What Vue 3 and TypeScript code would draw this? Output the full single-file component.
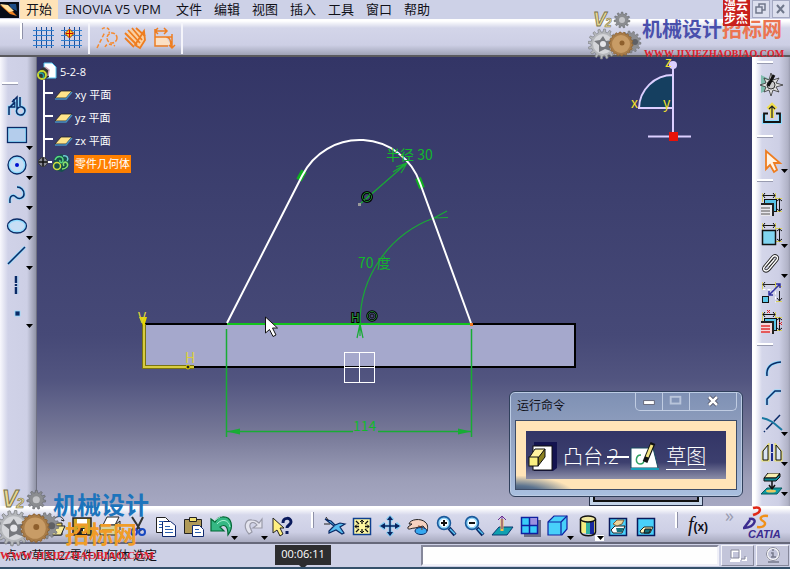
<script setup lang="ts">
import { ref } from 'vue'

interface Tool {
  label: string
  art: string
  wide?: boolean
}

const navy = '#0a2a66'
const sky = '#8fdcff'

/** Small triangle that marks a tool with a fly-out menu. */
const drop = (x: number, y: number): string =>
  `<path d="M${x - 3} ${y - 2}h7l-3.500 4z" fill="#000"/>`

/** Line drawn twice: a pale halo under a thin dark stroke. */
const halo = (d: string): string =>
  `<path d="${d}" fill="none" stroke="${sky}" stroke-width="3"/><path d="${d}" fill="none" stroke="${navy}" stroke-width="1.500"/>`

/** Outline of a gear wheel with square teeth. */
function gear(cx: number, cy: number, outer: number, inner: number, teeth: number): string {
  const points: string[] = []
  const step = (Math.PI * 2) / teeth
  for (let i = 0; i < teeth; i++) {
    const a = i * step
    const corners: [number, number][] = [
      [inner, a],
      [outer, a + step * 0.12],
      [outer, a + step * 0.45],
      [inner, a + step * 0.57]
    ]
    for (const [r, t] of corners) {
      points.push(`${(cx + r * Math.cos(t)).toFixed(1)} ${(cy + r * Math.sin(t)).toFixed(1)}`)
    }
  }
  return `M${points.join('L')}Z`
}

const menus: string[] = ['开始', 'ENOVIA V5 VPM', '文件', '编辑', '视图', '插入', '工具', '窗口', '帮助']

const gridLines =
  '<path d="M7.500 2v21M12.500 2v21M17.500 2v21M22.500 2v21" stroke="#1c4f9c"/><path d="M4 5.500h21M4 10.500h21M4 15.500h21M4 20.500h21" stroke="#2f7fd0"/>'

const gridTools: Tool[] = [
  { label: '网格', art: gridLines },
  {
    label: '点对齐',
    art: gridLines + '<path d="M12.500 4l4.500 4.500-4.500 4.500-4.500-4.500z" fill="#ffd020" stroke="#a03000"/><path d="M12.500 5v7M9 8.500h7" stroke="#c00"/>'
  }
]

const modeTools: Tool[] = [
  {
    label: '构造/标准元素',
    art: '<g fill="none" stroke="#f58a30" stroke-width="1.500"><path d="M3 23l8-16" stroke-dasharray="4 2"/><path d="M8 4c4-3 9 0 7 4" stroke-dasharray="3 2"/><circle cx="18" cy="13" r="5" stroke-dasharray="4 1.500"/><path d="M11 22c2-4 6-3 10-1" stroke-dasharray="3 2"/></g>'
  },
  {
    label: '几何约束',
    art: '<path d="M4 10l5-6 3 3 3-3 3 4 5-2v11l-5 5-6-2z" fill="#fbd0a0"/><g fill="none" stroke="#ee7d20" stroke-width="1.800"><path d="M3 8l12 12M6 5l12 13M10 3l10 12M3 13l9 9M14 3l9 8"/><path d="M22 6l-9 14 5 3 5-8z"/></g>'
  },
  {
    label: '尺寸约束',
    art: '<path d="M5 12h11l5 8H5z" fill="#fbe0c4"/><g fill="none" stroke="#ee7d20" stroke-width="1.500"><path d="M5 4v17h13M5 6h12M8 3L5 6l3 3M14 3l3 3-3 3M16 12c4 0 5 4 5 9M5 12h17M22 9v14M19 20l3 3 3-3" /></g>'
  }
]

const sketchTools: Tool[] = [
  {
    label: '轮廓',
    art: halo('M9 23v-8h6v-4l-4 3M9 23v-7l5-5 0-4') +
      `<path d="M12 10l5-5v5" fill="none" stroke="${navy}" stroke-width="1.500"/>` +
      halo('M20 5v9M17 8v9c-3 6 7 9 8 2 0-4-5-6-8-2')
  },
  {
    label: '矩形',
    art: `<rect x="8" y="6" width="18" height="14" fill="#b4cdec" stroke="${sky}" stroke-width="2"/><rect x="7.500" y="5.500" width="19" height="15" fill="none" stroke="${navy}" stroke-width="1.300"/>` + drop(29, 26)
  },
  {
    label: '圆',
    art: `<circle cx="17" cy="13" r="8" fill="#c7def5" stroke="${sky}" stroke-width="2"/><circle cx="17" cy="13" r="9" fill="none" stroke="${navy}" stroke-width="1.300"/><circle cx="17" cy="13" r="2" fill="#0010d0"/>` + drop(29, 26)
  },
  { label: '样条线', art: halo('M10 21c-1-9 4-8 6-6 3 3 8 1 8-3 0-4-3-7-7-7') + drop(29, 26) },
  {
    label: '椭圆',
    art: `<ellipse cx="17" cy="14" rx="8.500" ry="6" fill="#c7def5" stroke="${sky}" stroke-width="2"/><ellipse cx="17" cy="14" rx="9.500" ry="7" fill="none" stroke="${navy}" stroke-width="1.300"/>` + drop(29, 26)
  },
  { label: '直线', art: halo('M8 22L25 5') + drop(29, 26) },
  { label: '轴', art: `<path d="M16 4v7M16 12v2M16 15v7" stroke="${navy}" stroke-width="2.500"/><path d="M18 4v18" stroke="#9fcdf0"/>` },
  { label: '点', art: `<rect x="15" y="9" width="5" height="5" fill="${navy}" stroke="${sky}" stroke-width=".800"/>` + drop(29, 24) }
]

const dims =
  '<path d="M10.500 4v9M23.500 4v9M24 9.500h6M24 22.500h6" stroke="#d8cf5a" fill="none"/><path d="M11 6.500h12M13 4l-2 2.500 2 2.500M21 4l2 2.500-2 2.500M27.500 10v12M25 12l2.500-2 2.500 2M25 20l2.500 2 2.500-2" stroke="#111" fill="none"/>'

const rightGroups: Tool[][] = [
  [
    {
      label: '草图设置',
      art: '<path d="M9 4l18 9-18 9z" fill="#7fbcae"/><path d="M19 2l2 7 6-2-3 5 7 2-7 2 3 5-6-2-2 6-2-6-5 2 2-5-6-2 6-2-2-5 5 2z" fill="#ddd" stroke="#333" stroke-width=".800"/><circle cx="19" cy="14" r="4" fill="#ccc" stroke="#333"/><path d="M22 4l-6 11" stroke="#111" stroke-width="3"/>'
    },
    {
      label: '退出工作台',
      art: `<path d="M12 13v8h16v-8" fill="#cfd2e8" stroke="${sky}" stroke-width="4"/><path d="M16 12.500h-4v8.500h16v-8.500h-4" fill="none" stroke="#111" stroke-width="1.800"/><path d="M20 17V5M16 8l4-4 4 4" fill="none" stroke="#f0de50" stroke-width="4"/><path d="M20 17V5M17 8l3-3 3 3" fill="none" stroke="#222" stroke-width="1.200"/>`
    }
  ],
  [
    {
      label: '选择',
      art: '<path d="M14 6v18l4-4 4 7 3-2-3-7h6z" fill="#fff3e4" stroke="#ee7d20" stroke-width="1.800"/>' + drop(32, 26)
    }
  ],
  [
    {
      label: '对话框中定义的约束',
      art: dims + '<rect x="12.500" y="10.500" width="12" height="12" fill="#58c4e8" stroke="#111"/><rect x="9" y="15" width="12" height="12" fill="#e8e8ee"/><path d="M9 15h12v12" fill="none" stroke="#222" stroke-width="2"/><path d="M9 19h9M9 22h9M9 25h9" stroke="#555"/>'
    },
    {
      label: '约束',
      art: dims + '<rect x="10.500" y="11.500" width="13" height="14" fill="#80d4f0" stroke="#111" stroke-width="1.500"/>' + drop(32, 27)
    },
    {
      label: '固联',
      art: '<g transform="translate(4 3) scale(.8)"><path d="M11 18L21 6c3-3 8 0 5 4L16 22c-4 4-9 0-5-4M15 18l8-9" fill="none" stroke="#222" stroke-width="4"/><path d="M11 18L21 6c3-3 8 0 5 4L16 22c-4 4-9 0-5-4M15 18l8-9" fill="none" stroke="#fff" stroke-width="1.800"/></g>' + drop(32, 27)
    },
    {
      label: '制作动画约束',
      art: '<path d="M10.500 3v8M23.500 3v8M24 7.500h6M24 22.500h6" stroke="#d8cf5a"/><path d="M11 5.500h12M13 3l-2 2.500 2 2.500M27.500 12v10M25 19l2.500 3 2.500-3" fill="none" stroke="#222"/><path d="M10.500 10.500h13v13" fill="none" stroke="#fff" stroke-dasharray="3 2"/><rect x="10.500" y="17.500" width="6" height="6" fill="#5cc8e8" stroke="#111"/><path d="M17 16l11-11M24 5h4v4M17 12v4h4" fill="none" stroke="#3030a0" stroke-width="1.500"/>'
    },
    {
      label: '编辑多重约束',
      art: '<g transform="translate(0 -1)">' + dims + '</g><rect x="12.500" y="9.500" width="12" height="12" fill="#58c4e8" stroke="#111"/><rect x="9" y="14" width="12" height="10" fill="#f4d8dc"/><path d="M9 13h12v12" fill="none" stroke="#222" stroke-width="2"/><path d="M9 17h9M9 20h9M9 23h9" stroke="#e03030" stroke-width="1.500"/><path d="M15 1l3 3M18 1l-3 3M27 13l3 3M30 13l-3 3" stroke="#e02020"/>'
    }
  ],
  [
    { label: '圆角', art: halo('M15 23c-1-8 3-13 14-14') },
    { label: '倒角', art: halo('M15 22v-6l8-8h6') },
    {
      label: '修剪',
      art: '<path d="M10 5c8 1 13 6 20 12" fill="none" stroke="#1878a0" stroke-width="2"/><path d="M28 2L12 19" stroke="#0a2a66" stroke-width="1.500" stroke-dasharray="9 2"/>' + drop(32, 21)
    },
    {
      label: '镜像',
      art: '<path d="M16 3v14h-5V9zM24 3v14h5V9z" fill="#d5ecf0" stroke="#e6de70" stroke-width="3"/><path d="M16 2v15h-5V8zM24 2v15h5V8z" fill="#d9e4f4" stroke="#111"/><path d="M20 1v18" stroke="#1a2a90" stroke-width="2" stroke-dasharray="8 1"/>' + drop(32, 21)
    },
    {
      label: '投影3D元素',
      art: '<path d="M16 0h12l-4 5H12z" fill="#f8efb0" stroke="#111"/><path d="M12 5h12l4-4v3l-4 4H12z" fill="#0c8a96" stroke="#111"/><path d="M15 15h15l-5 6H9z" fill="#0c9aa0" stroke="#0a5a60"/><path d="M20 8v7M17 12l3 4 3-4" fill="none" stroke="#111" stroke-width="1.500"/><ellipse cx="19" cy="18" rx="5" ry="1.500" fill="#e8c860"/>' + drop(32, 21)
    }
  ]
]

const magnifier =
  `<path d="M17 22l6 7" stroke="${navy}" stroke-width="4"/><path d="M18 23l5 5" stroke="#58c4f4" stroke-width="1.500"/><circle cx="12" cy="17" r="6" fill="#f4fbff" stroke="#1b5a9c" stroke-width="2.500"/><circle cx="12" cy="17" r="5" fill="none" stroke="${sky}" stroke-width="1.200"/>`

const fileTools: Tool[] = [
  { label: '新建', art: '<path d="M7 11h10l5 5v14H7z" fill="#fff" stroke="#222"/>' },
  { label: '打开', art: '<path d="M4 15h7l2 2h9v12H4z" fill="#e8d060" stroke="#222"/><path d="M4 29l4-9h17l-4 9z" fill="#f8ec9c" stroke="#222"/><path d="M15 12c4-3 8-1 9 3l-3-1" fill="none" stroke="#222"/>' },
  { label: '保存', art: '<path d="M5 12h18v17H5z" fill="#c9a628" stroke="#222" stroke-width="1.500"/><rect x="9" y="13" width="10" height="7" fill="#fff"/><rect x="9" y="22" width="10" height="7" fill="#222"/><rect x="15" y="23" width="3" height="5" fill="#fff"/>' },
  { label: '打印', art: '<path d="M11 11h12l-4 8H7z" fill="#fff" stroke="#222"/><path d="M4 19h15l5-4v9l-5 5H4z" fill="#d8d2a0" stroke="#222"/><path d="M6 24h12" stroke="#c9a628" stroke-width="2"/>' },
  { label: '剪切', art: '<path d="M8 11l9 14M19 11l-7 14" stroke="#333" stroke-width="2"/><circle cx="10" cy="26" r="3" fill="none" stroke="#1848c0" stroke-width="2"/><circle cx="18" cy="26" r="3" fill="none" stroke="#1848c0" stroke-width="2"/>' },
  { label: '复制', art: '<path d="M4.500 11.500h9l4 4v11h-13z" fill="#fff" stroke="#222"/><path d="M10.500 15.500h8l5 4v11h-13z" fill="#fff" stroke="#102a70"/><path d="M7 15.500h5M7 18.500h3M7 21.500h3M13 20.500h5M13 23.500h8M13 26.500h8" stroke="#2a60b0"/>' },
  { label: '粘贴', art: '<path d="M4.500 13.500h17v14h-17z" fill="#b09a58" stroke="#222"/><path d="M9.500 11.500h7v4h-7z" fill="#f0e070" stroke="#222"/><path d="M12.500 19.500h7l4 4v7h-11z" fill="#fff" stroke="#102a70"/><path d="M15 23.500h4M15 26.500h6" stroke="#2a60b0"/>' },
  { label: '撤消', wide: true, art: '<path d="M3 13v12h13l-4-4c4-3 8-2 8 8 6-8 4-19-6-18-4 0-6 3-7 5z" fill="#35b884" stroke="#063" stroke-width="1.200"/><path d="M9 18c5-6 12-4 13 3M6 15l6-4" fill="none" stroke="#a8f0d0"/>' + drop(26, 32) },
  { label: '重做', wide: true, art: '<path d="M24 13v9h-9l4-3c-3-4-8-3-7 2l2 5-3 2c-7-8-3-15 3-14 3 0 5 1 7 3z" fill="#e4e4ee" stroke="#999aa8" stroke-width="1.200"/>' + drop(26, 32) },
  { label: '这是什么？', art: '<path d="M5 12v15l4-3 3 6 3-2-3-6h4z" fill="#fff080" stroke="#222"/><path d="M15 17c0-6 8-6 8-1 0 3-4 3-4 6M19 25v3" fill="none" stroke="#0a1a5c" stroke-width="3"/>' }
]

const viewTools: Tool[] = [
  { label: '飞行模式', art: '<path d="M5 13l6 2 4 4 5-2 5 1-5 3 4 6-2 1-6-4-7 3v-2l5-5-4-3z" fill="#58bdf0" stroke="#0a2a66" stroke-width="1.200"/><path d="M4 18h6M8 14l-2-3" stroke="#222"/>' },
  { label: '全部适应', art: '<rect x="5.500" y="12.500" width="17" height="16" fill="#fdf6a0" stroke="#104090" stroke-width="1.500"/><path d="M14 14v4M14 23v4M7 20.500h4M17 20.500h4M8 15l3 3M20 15l-3 3M8 26l3-3M20 26l-3-3" stroke="#111" stroke-width="1.300"/><path d="M12 16l2-2 2 2M12 25l2 2 2-2M9 18.500l-2 2 2 2M19 18.500l2 2-2 2" fill="none" stroke="#111"/>' },
  { label: '平移', art: '<path d="M14 12v17M6 20h17M11 14l3-3 3 3M11 26l3 3 3-3M9 17l-4 3 4 3M20 17l3 3-3 3" fill="none" stroke="#80ccf4" stroke-width="3"/><path d="M14 12v17M6 20h17" stroke="#0a2460" stroke-width="1.500"/><path d="M14 10l3 4h-6zM14 30l3-4h-6zM4 20l5-3v6zM24 20l-5-3v6z" fill="#0a2460"/>' },
  { label: '旋转', art: '<path d="M5 18c1-5 12-6 16-2 3 2 3 6 2 9l-4-5-8 2c-4 0-8 3-7-1l4-3z" fill="#f6d2c0" stroke="#222"/><ellipse cx="17" cy="25" rx="6" ry="3.500" fill="#36a8f0" stroke="#0a2a66"/><path d="M14 20c3 0 4 2 4 4" fill="none" stroke="#7a4020"/>' },
  { label: '放大', art: magnifier + '<path d="M12 14v6M9 17h6" stroke="#111" stroke-width="2"/>' },
  { label: '缩小', art: magnifier + '<path d="M9 17h6" stroke="#111" stroke-width="2"/>' },
  { label: '法线视图', art: '<path d="M11 21h14l-6 8H4z" fill="#10a0b0" stroke="#0a3a70"/><path d="M14 25V13" stroke="#f0c050" stroke-width="3"/><path d="M14 23V11M10 14l4-4 4 4" fill="none" stroke="#6a2a90"/>' },
  { label: '创建多视图', art: '<path d="M8 14h17v17H8z" fill="#6c6e88"/><rect x="5.500" y="11.500" width="16" height="16" fill="#38ccf8" stroke="#1020a0" stroke-width="1.500"/><path d="M14 12h7v7h-7z" fill="#9c90e0"/><path d="M13.500 12v16M6 19.500h16" stroke="#1020a0" stroke-width="1.500"/>' },
  { label: '等轴测视图', wide: true, art: '<path d="M4 16l6-6h13v13l-5 6H4z" fill="#48d0fa" stroke="#1020a0" stroke-width="1.200"/><path d="M4 16h13v13M17 16l6-6" fill="none" stroke="#1020a0" stroke-width="1.200"/>' + drop(26, 32) },
  { label: '带边着色', wide: true, art: '<rect x="7" y="13" width="14" height="14" fill="#f4ee80"/><rect x="12" y="14" width="4" height="14" fill="#30b0a0"/><rect x="16" y="14" width="4" height="14" fill="#1828a0"/><path d="M6.500 13v13c2 5 14 5 15 0V13" fill="none" stroke="#111" stroke-width="1.500"/><ellipse cx="14" cy="13" rx="7.500" ry="3" fill="#f0e8a0" stroke="#111" stroke-width="1.500"/><path d="M21 29h9v6h-9z" fill="#fff"/>' + drop(26, 32) },
  { label: '隐藏/显示', art: '<rect x="5.500" y="12.500" width="17" height="17" fill="#48d0fa" stroke="#0a1a5c" stroke-width="1.500"/><path d="M7 24l4-4h10l-3 7H9z" fill="#fff" stroke="#222"/><path d="M12 22h8l-2 4h-5z" fill="#18707a"/><path d="M9 18l4-4h7l-2 4-5 2z" fill="#ecd49a" stroke="#7a6040"/>' },
  { label: '交换可视空间', art: '<rect x="5.500" y="12.500" width="17" height="17" fill="#48d0fa" stroke="#0a1a5c" stroke-width="1.500"/><path d="M8 25l4-4h9l-3 6H9z" fill="#fff8c0" stroke="#222"/><path d="M13 23h6l-2 4h-5z" fill="#18707a" stroke="#111"/>' }
]

const planes: string[] = ['xy 平面', 'yz 平面', 'zx 平面']
const stamps: string[] = ['top', 'low']
const command = ref('')
</script>

<template>
  <div class="app">
    <nav class="menubar" aria-label="主菜单">
      <svg class="app-mark" viewBox="0 0 20 19" aria-hidden="true">
        <rect y="2" width="19" height="16" fill="#080c18" />
        <path d="M9 4h7l1 7-6-3z" fill="#1c4c88" />
        <path d="M0 5l8 2 9 9-7-2z" fill="#f08020" />
        <path d="M0 4l8 1 6 6-5 1z" fill="#ffe0a0" />
      </svg>
      <button
        v-for="(m, i) in menus"
        :key="m"
        type="button"
        class="menu"
        :class="{ open: i === 0, long: m.length > 2 }"
      >{{ m }}</button>
      <span class="mdi">
        <button type="button" aria-label="还原">
          <svg viewBox="0 0 16 16"><path d="M6 6V3h6v6h-3M3 6h6v6H3z" fill="none" stroke="#70788c" stroke-width="1.500" /></svg>
        </button>
        <button type="button" aria-label="关闭">
          <svg viewBox="0 0 16 16"><path d="M4 4l7 8M11 4l-7 8" stroke="#70788c" stroke-width="2" /></svg>
        </button>
      </span>
    </nav>

    <div class="topbar" role="toolbar" aria-label="草图工具">
      <i class="grip-v"></i>
      <div class="set">
        <button v-for="t in gridTools" :key="t.label" type="button" class="t28" :aria-label="t.label">
          <svg viewBox="0 0 28 26" v-html="t.art"></svg>
        </button>
      </div>
      <div class="set">
        <button v-for="t in modeTools" :key="t.label" type="button" class="t28" :aria-label="t.label">
          <svg viewBox="0 0 28 26" v-html="t.art"></svg>
        </button>
      </div>
    </div>

    <div class="work">
      <div class="side left" role="toolbar" aria-label="轮廓">
        <i class="grip-h"></i>
        <button v-for="t in sketchTools" :key="t.label" type="button" :aria-label="t.label">
          <svg viewBox="0 0 37 30" v-html="t.art"></svg>
        </button>
      </div>

      <main class="view">
        <svg class="scene" viewBox="37 57 715 449" preserveAspectRatio="xMinYMin meet">
          <rect x="144" y="324" width="431" height="43" fill="#a5a8cc" stroke="#000" stroke-width="2" />
          <g fill="none" stroke="#18ac34" stroke-width="1.200">
            <path d="M226.500 329v108M471.500 329v108" stroke-width="1.500" />
            <path d="M227 431.500h126M378 431.500h93" stroke-width="1.500" />
            <path d="M360 324A112 112 0 0 1 434 218L447 211M434 218L448 217.500" />
            <path d="M360 324l-3 14M360 324l3 14M360 320v16" />
            <path d="M360 204L407 163M396 167L407 163L401 173M393 172L407 163" />
          </g>
          <path d="M227 431.500l13-3v6zM471 431.500l-13-3v6z" fill="#18ac34" />
          <path d="M299 180l5-9M418 178l4 10" stroke="#10b020" stroke-width="6" />
          <path d="M227 324h244" stroke="#12c41c" stroke-width="2" />
          <path d="M227 323L302 176A64 64 0 0 1 420 183L471 323" fill="none" stroke="#fff" stroke-width="2" />
          <rect x="470" y="323" width="3" height="3" fill="#f07820" />
          <rect x="358" y="203" width="3" height="3" fill="#9a9a9a" />
          <g fill="none">
            <circle cx="367" cy="197" r="4.500" stroke="#000" stroke-width="3" />
            <circle cx="367" cy="197" r="4.500" stroke="#1a8a2c" />
            <path d="M364 200l6-6" stroke="#1a8a2c" />
            <circle cx="372" cy="316" r="4.500" stroke="#000" stroke-width="2.500" />
            <circle cx="372" cy="316" r="4.500" stroke="#2a9a3c" stroke-width=".800" />
            <circle cx="372" cy="316" r="2" stroke="#111" />
          </g>
          <text x="351" y="322" class="mark-h">H</text>
          <text x="386" y="160" class="dim">半径 30</text>
          <text x="358" y="268" class="dim">70 度</text>
          <text x="353" y="431" class="dim">114</text>

          <path d="M144 324v43h50" fill="none" stroke="#7a7410" stroke-width="4" />
          <path d="M144 320v47h50" fill="none" stroke="#d8cc40" stroke-width="2" />
          <path d="M139 317l5 10 3-10z" fill="#e8d800" />
          <circle cx="188" cy="367" r="2" fill="#222" stroke="#e8d800" />
          <text x="138" y="323" class="axis">V</text>
          <text x="185" y="363" class="axis">H</text>

          <g fill="none" stroke="#fff">
            <rect x="344.500" y="352.500" width="30" height="30" />
            <path d="M359.500 353v30M345 367.500h30" />
          </g>
          <path d="M265.500 317v16l4-3.500 3.500 7 3-1.500-3.500-7h5z" fill="#fff" stroke="#111" />

          <path d="M639 108A34 34 0 0 1 673 75V108Z" fill="#153f60" stroke="#dccfff" stroke-width="2" />
          <path d="M673 65v68M648 136.500h43" stroke="#dccfff" stroke-width="2" />
          <circle cx="673" cy="65" r="4" fill="#dccfff" />
          <rect x="669" y="132" width="9" height="9" fill="#e81208" />
          <text x="665" y="67" class="compass">z</text>
          <text x="631" y="108" class="compass">x</text>
          <text x="663" y="108" class="compass">y</text>
        </svg>

        <ul class="tree">
          <li class="root">
            <svg viewBox="0 0 22 20" aria-hidden="true">
              <path d="M7 1h8l4 4v11H7z" fill="#fff" stroke="#58c8f0" />
              <path d="M2 8l5-3 5 3v7l-5 3-5-3z" fill="#333" />
              <path d="M8 5l4 3-1 6" fill="none" stroke="#c8a0b0" stroke-width="1.500" />
              <circle cx="5" cy="13" r="4" fill="none" stroke="#c8d830" stroke-width="2" />
              <path d="M2 12c3-3 6 1 4 4" fill="none" stroke="#20a0a0" stroke-width="1.500" />
            </svg>
            <span>5-2-8</span>
          </li>
          <li v-for="p in planes" :key="p" class="plane">
            <svg viewBox="0 0 30 20" aria-hidden="true">
              <path d="M0 8h9" stroke="#fff" stroke-width="2" />
              <path d="M17 6h11l-6 7H11z" fill="#ffe48a" stroke="#222" stroke-width=".800" />
              <path d="M11 14h11l6-7" fill="none" stroke="#4890c0" stroke-width="1.500" />
            </svg>
            <span>{{ p }}</span>
          </li>
          <li class="body">
            <svg viewBox="0 0 34 20" aria-hidden="true">
              <path d="M5 8h10" stroke="#fff" stroke-width="2" />
              <circle cx="6" cy="8" r="4.500" fill="#888a94" stroke="#333" />
              <path d="M2 8h8M6 4v8" stroke="#111" stroke-width="1.500" />
              <path d="M18 3l6-3 7 2 2 6-2 6-6 4-7-2-2-6z" fill="#16504c" />
              <g fill="none" stroke-width="1.500">
                <circle cx="20" cy="12" r="3.500" stroke="#d0e040" />
                <path d="M18 6c2-5 8-4 8 0s-4 3-3 0" stroke="#58d880" />
                <path d="M25 15c4 0 7-3 5-6-2-2-5 0-3 3" stroke="#88e070" />
                <path d="M26 2c4-1 6 2 4 5" stroke="#70c8d8" />
              </g>
            </svg>
            <span class="picked">零件几何体</span>
          </li>
        </ul>

        <div class="behind"></div>
        <section class="dialog" aria-label="运行命令">
          <header>
            <span class="title">运行命令</span>
            <span class="win">
              <button type="button" aria-label="最小化"><svg viewBox="0 0 27 18"><rect x="8" y="9" width="11" height="4" fill="#fff" stroke="#556" stroke-width=".800" /></svg></button>
              <button type="button" aria-label="最大化"><svg viewBox="0 0 27 18"><rect x="8" y="5" width="10" height="7" fill="none" stroke="#b8c4da" stroke-width="2" /></svg></button>
              <button type="button" class="shut" aria-label="关闭"><svg viewBox="0 0 46 18"><path d="M19 5l8 8M27 5l-8 8" stroke="#445" stroke-width="4" /><path d="M19 5l8 8M27 5l-8 8" stroke="#fff" stroke-width="2.500" /></svg></button>
            </span>
          </header>
          <div class="pane">
            <div class="graph">
              <svg viewBox="0 0 30 30" aria-hidden="true">
                <path d="M7 0h23v26l-4 3H7z" fill="#141450" />
                <rect x="6" y="4" width="19" height="24" fill="#fff" stroke="#111" />
                <path d="M2 16l6-9h10l-6 9z" fill="#fff2a0" stroke="#111" />
                <path d="M11 16l7-9v8l-7 9z" fill="#8a8020" stroke="#111" />
                <rect x="2" y="15" width="9" height="9" fill="#fbf080" stroke="#111" />
              </svg>
              <span class="node">凸台.2</span>
              <i class="link"></i>
              <svg viewBox="0 0 30 30" aria-hidden="true">
                <path d="M1 6h22l5 20H1z" fill="#fff" stroke="#174a60" />
                <path d="M1 27h28" stroke="#18a0b8" stroke-width="2" />
                <path d="M11 13c-6 0-6 9-1 9 3 0 4-2 4-4" fill="none" stroke="#30a060" stroke-width="1.500" />
                <path d="M23 1L15 20" stroke="#111" stroke-width="5" />
                <path d="M22 3l-5 12" stroke="#f4e480" stroke-width="3" />
              </svg>
              <span class="node under">草图</span>
            </div>
          </div>
        </section>
      </main>

      <div class="side right" role="toolbar" aria-label="约束和操作">
        <template v-for="(g, i) in rightGroups" :key="i">
          <i class="grip-h"></i>
          <button v-for="t in g" :key="t.label" type="button" :aria-label="t.label">
            <svg viewBox="0 0 38 30" v-html="t.art"></svg>
          </button>
        </template>
      </div>
    </div>

    <div class="bottombar" role="toolbar" aria-label="标准和视图">
      <button v-for="t in fileTools" :key="t.label" type="button" :class="t.wide ? 't30' : 't28'" :aria-label="t.label">
        <svg :viewBox="t.wide ? '0 0 30 36' : '0 0 28 36'" v-html="t.art"></svg>
      </button>
      <i class="grip-v"></i>
      <button v-for="t in viewTools" :key="t.label" type="button" :class="t.wide ? 't30' : 't28'" :aria-label="t.label">
        <svg :viewBox="t.wide ? '0 0 30 36' : '0 0 28 36'" v-html="t.art"></svg>
      </button>
      <i class="grip-v"></i>
      <button type="button" class="fx" aria-label="公式"><b>f</b>(x)</button>
      <span class="more">»</span>
      <svg class="catia" viewBox="0 0 46 36" aria-label="CATIA">
        <path d="M10 2c8-2 9 3 3 6l-3 1" fill="none" stroke="#e02818" stroke-width="2.500" />
        <path d="M6 13c9-2 7 8-5 9l6-8" fill="none" stroke="#3c2c90" stroke-width="2.500" />
        <path d="M25 10c-8-1-9 3-5 5s2 7-6 6" fill="none" stroke="#f09018" stroke-width="2.500" />
        <text x="5" y="32" class="brand">CATIA</text>
      </svg>
    </div>

    <footer class="status">
      <span class="message">点.6/草图.2/零件几何体 选定</span>
      <span class="clock">00:06:11</span>
      <input v-model="command" type="text" aria-label="命令输入" />
      <button type="button" aria-label="对话框位置"><svg viewBox="0 0 31 19"><path d="M10 5h8v8h-8zM20 14h4v-3M8 15h10" fill="none" stroke="#fff" stroke-width="2" /><path d="M9 4h8v8H9zM19 13h4v-3" fill="none" stroke="#85879a" /></svg></button>
      <button type="button" aria-label="知识"><svg viewBox="0 0 31 19"><circle cx="16" cy="8" r="6" fill="none" stroke="#fff" stroke-width="2" /><circle cx="16" cy="8" r="6.500" fill="none" stroke="#85879a" /><path d="M14 7h2v4M14 11h5M15 4h2M11 16h11" fill="none" stroke="#77798c" stroke-width="1.500" /></svg></button>
    </footer>

    <div v-for="s in stamps" :key="s" class="stamp" :class="s">
      <svg viewBox="0 0 54 60" aria-hidden="true">
        <path :d="gear(34, 15, 8, 6, 11)" fill="#8b8d90" stroke="#66696d" stroke-width=".600" />
        <circle cx="34" cy="15" r="3" fill="#c3c4c7" />
        <path :d="gear(42, 37, 11, 9, 14)" fill="#8d8e92" stroke="#6f7074" stroke-width=".600" />
        <circle cx="47" cy="37" r="3" fill="#5f6064" />
        <path :d="gear(15, 39, 15, 12, 16)" fill="#b5b7bb" stroke="#808286" stroke-width=".700" />
        <circle cx="15" cy="39" r="10" fill="#d5d6da" />
        <path d="M15 31l3 5 6-1-3 5 2 6-6-2-6 3v-7l-5-4 6-1z" fill="#76787d" />
        <circle cx="15" cy="39" r="3" fill="#e6e6ea" />
        <path :d="gear(33, 39, 12, 11, 18)" fill="#a87c48" stroke="#8a5c28" stroke-width=".700" />
        <circle cx="33" cy="39" r="9" fill="#c89c66" />
        <circle cx="34" cy="38" r="2.500" fill="#8e5f2c" />
        <text x="5" y="21" class="v-mark">V</text>
        <text x="17" y="22" class="v-two">2</text>
      </svg>
      <p class="cn"><span>机械设计</span><em>招标网</em></p>
      <p class="url">WWW.JIXIEZHAOBIAO.COM</p>
    </div>
    <div class="seal">漫云步杰</div>
  </div>
</template>

<style>
body {
  margin: 0;
}
</style>

<style scoped>
.app {
  position: relative;
  display: flex;
  flex-direction: column;
  min-height: 100vh;
  overflow: hidden;
  box-sizing: border-box;
  border-bottom: 2px solid #34506a;
  background: #cdd0e5;
  color: #101018;
  font-family: "Open Sans", "Noto Sans CJK SC", sans-serif;
}
button {
  display: block;
  flex: none;
  padding: 0;
  border: 0;
  background: none;
  color: inherit;
  font: inherit;
}
svg {
  display: block;
}

.menubar {
  display: flex;
  height: 19px;
  background: #cdd1e7;
  font-size: 13px;
  line-height: 19px;
}
.app-mark {
  width: 20px;
  height: 19px;
}
.menu {
  padding: 0 6px;
  white-space: nowrap;
}
.menu.open {
  background: #ffe3b8;
}
.menu.long {
  padding: 0 9px 0 7px;
}
.mdi {
  display: flex;
  gap: 2px;
  margin-left: auto;
}
.mdi button {
  width: 18px;
  height: 18px;
  box-sizing: border-box;
  border: 1px solid #a4a9c2;
  background: #dcdfee;
}

.topbar {
  display: flex;
  height: 38px;
  box-sizing: border-box;
  border-bottom: 2px solid #5a5a5e;
  background: linear-gradient(#fff 0, #fff 2px, #d3d5e9 9px, #cdcfe5 26px, #9fa2b6 36px);
}
.grip-v {
  flex: none;
  align-self: flex-start;
  width: 2px;
  height: 16px;
  border-right: 1px solid #8e91a8;
  background: #fff;
}
.topbar .grip-v {
  margin: 4px 6px 0 20px;
}
.set {
  display: flex;
  align-items: center;
  height: 32px;
  margin-top: 3px;
  padding-right: 3px;
  border-right: 2px solid #f4f4fa;
}
.set + .set {
  padding-left: 4px;
}
.t28 {
  width: 28px;
}
.t30 {
  width: 30px;
}

.work {
  display: grid;
  flex: 1;
  grid-template-columns: 37px minmax(0, 1fr) 38px;
}
.side {
  display: flex;
  flex-direction: column;
}
.left {
  padding-top: 21px;
  background: linear-gradient(90deg, #f8f8fd 0, #d0d2e8 8px, #cdcfe5 27px, #9093a6 36px, #505060 37px);
}
.right {
  background: linear-gradient(90deg, #fff 0, #fff 3px, #d4d6ea 10px, #cdcfe5 27px, #b0b2c6 36px, #9a9cb0 38px);
}
.grip-h {
  width: 16px;
  height: 2px;
  margin: 4px 0 7px 2px;
  border-bottom: 1px solid #989bb0;
  background: #fff;
}
.right .grip-h {
  margin-left: 5px;
}

.view {
  position: relative;
  overflow: hidden;
  background: linear-gradient(#333566 0, #3d406f 32%, #464977 62%, #525580 72%, #777998 84%, #9c9eb8 94%, #a6a8c2 100%);
}
.scene {
  width: 100%;
}
.scene text {
  font-family: "Noto Sans CJK SC", sans-serif;
}
.dim {
  fill: #12b82c;
  font-size: 14px;
}
.mark-h {
  fill: #2a9a3c;
  stroke: #000;
  stroke-width: 2px;
  paint-order: stroke;
  font-size: 12px;
}
.axis {
  fill: #dccf3c;
  font-size: 14px;
}
.compass {
  fill: #f4e02c;
  font-size: 14px;
}

.tree {
  position: absolute;
  top: 3px;
  left: 0;
  margin: 0;
  padding: 0;
  list-style: none;
  color: #fff;
  font-size: 11px;
  line-height: 18px;
}
.tree::before {
  position: absolute;
  top: 16px;
  left: 6px;
  width: 2px;
  height: 84px;
  background: #fff;
  content: "";
}
.tree li {
  position: relative;
  display: flex;
  align-items: center;
  height: 23px;
}
.tree svg {
  height: 20px;
}
.root svg {
  width: 22px;
}
.plane {
  padding-left: 7px;
}
.plane svg {
  width: 30px;
}
.body svg {
  width: 34px;
}
.tree span {
  padding: 0 1px;
  white-space: nowrap;
}
.body span {
  margin-left: 3px;
}
.picked {
  background: #ff8000;
}

.behind {
  position: absolute;
  right: 49px;
  bottom: 0;
  width: 114px;
  height: 20px;
  box-sizing: border-box;
  border: 1px solid #28324a;
  background: #888aa6;
  box-shadow: inset 0 0 0 3px #c4d4e8, inset 0 0 0 5px #111;
}
.dialog {
  position: absolute;
  right: 9px;
  bottom: 9px;
  width: 234px;
  height: 106px;
  box-sizing: border-box;
  padding: 0 5px 5px;
  border: 1px solid #30405c;
  border-radius: 6px;
  background: linear-gradient(#7e90b4 0, #8c9cbc 30px, #a4b8d8 90px, #a9c0e0 100%);
  box-shadow: inset 0 0 0 1px #bccce4;
}
.dialog header {
  display: flex;
  justify-content: space-between;
  height: 28px;
}
.title {
  padding: 5px 2px 0;
  font-size: 12px;
  line-height: 18px;
}
.win {
  display: flex;
  height: 18px;
  overflow: hidden;
  border: 1px solid #c0cce2;
  border-top: 0;
  border-radius: 0 0 5px 5px;
}
.win button {
  width: 27px;
  border-right: 1px solid #c0cce2;
}
.win .shut {
  width: 46px;
  border-right: 0;
}
.pane {
  height: 70px;
  box-sizing: border-box;
  padding: 10px;
  border: 1px solid #3c4c68;
  background: radial-gradient(ellipse at 0 110%, #283c60 0, #5c7490 30px, #ffe4b8 60px);
}
.graph {
  display: flex;
  align-items: center;
  height: 48px;
  padding: 4px 0 0 1px;
  box-sizing: border-box;
  background: linear-gradient(#333566 0, #3c3f6e 65%, #8c8ea8 100%);
  color: #fff;
}
.graph svg {
  flex: none;
  width: 30px;
  height: 30px;
}
.node {
  padding: 0 0 0 6px;
  font-size: 20px;
  font-weight: 300;
  line-height: 24px;
  white-space: nowrap;
}
.under {
  padding: 0;
  margin-left: 6px;
  border-bottom: 1px solid #fff;
}
.link {
  flex: none;
  width: 22px;
  height: 2px;
  margin: 0 1px 0 -12px;
  background: #fff;
}

.bottombar {
  display: flex;
  height: 38px;
  box-sizing: border-box;
  padding-left: 12px;
  border-bottom: 2px solid #66687a;
  background: linear-gradient(#fff 0, #fff 2px, #d6d8eb 9px, #cdcfe5 26px, #a9abc0 36px);
}
.bottombar .grip-v {
  margin: 6px 6px 0 15px;
}
.fx {
  width: 28px;
  font-family: "Liberation Sans", sans-serif;
  font-size: 12px;
  font-weight: 700;
}
.fx b {
  font-family: "Liberation Serif", serif;
  font-size: 20px;
  font-style: italic;
  font-weight: 400;
}
.more {
  margin-left: auto;
  color: #9a9cb0;
  font-size: 18px;
  line-height: 18px;
}
.catia {
  width: 46px;
  height: 36px;
  margin: 0 1px 0 9px;
}
.brand {
  fill: #3c2c90;
  font: italic 700 11px "Liberation Sans", sans-serif;
}

.status {
  display: flex;
  align-items: center;
  gap: 2px;
  height: 23px;
  padding-right: 1px;
  background: #cdd0e5;
}
.message {
  padding-left: 5px;
  font-size: 12px;
  line-height: 16px;
  white-space: nowrap;
}
.clock {
  position: absolute;
  bottom: 2px;
  left: 275px;
  width: 56px;
  height: 20px;
  background: #2d2d2f;
  color: #fff;
  font-size: 11px;
  line-height: 18px;
  text-align: center;
}
.clock::after {
  position: absolute;
  top: 20px;
  left: 24px;
  border: 4px solid transparent;
  border-top-color: #2d2d2f;
  content: "";
}
.status input {
  width: 298px;
  height: 21px;
  box-sizing: border-box;
  margin-left: auto;
  padding: 0 4px;
  border: 2px solid #85879a;
  border-right-color: #f0f0f8;
  border-bottom-color: #f0f0f8;
  background: #fefefe;
  font-size: 12px;
}
.status button {
  width: 33px;
  height: 21px;
  box-sizing: border-box;
  border: 1px solid #f4f4fa;
  border-right-color: #85879a;
  border-bottom-color: #85879a;
  background: #c3c5da;
}

.stamp {
  position: absolute;
  white-space: nowrap;
}
.stamp p {
  margin: 0;
}
.stamp em {
  font-style: normal;
}
.stamp svg {
  position: absolute;
}
.stamp .cn {
  font-family: "Noto Sans CJK SC", sans-serif;
  font-weight: 700;
}
.stamp .url {
  color: #e0202c;
  font-family: "Liberation Serif", serif;
  font-weight: 700;
  line-height: 16px;
}
.top {
  top: 5px;
  right: 6px;
  width: 196px;
}
.top svg {
  width: 54px;
  height: 60px;
}
.top .cn {
  padding: 9px 0 0 54px;
  color: #4a50ac;
  font-size: 20px;
  line-height: 30px;
}
.top em {
  color: #ec7450;
}
.top .url {
  padding-left: 56px;
  font-size: 10px;
  line-height: 20px;
}
.low {
  bottom: 4px;
  left: 0;
  width: 160px;
}
.low svg {
  bottom: 10px;
  left: -4px;
  width: 64px;
  height: 71px;
}
.low .cn {
  display: flex;
  flex-direction: column;
  padding-left: 53px;
  color: #1c74bc;
  font-size: 24px;
  line-height: 29px;
}
.low em {
  padding-left: 12px;
  color: #f09c28;
}
.low .url {
  font-size: 11px;
}
.v-mark {
  fill: #e8d890;
  stroke: #77704a;
  stroke-width: .800px;
  font: italic 700 20px "Liberation Sans", sans-serif;
}
.v-two {
  fill: #e8d890;
  stroke: #77704a;
  stroke-width: .500px;
  font: italic 700 12px "Liberation Sans", sans-serif;
}
.seal {
  position: absolute;
  top: 0;
  right: 40px;
  width: 27px;
  height: 26px;
  box-sizing: border-box;
  padding: 0 1px;
  background: #c8201c;
  color: #fff;
  font-family: "Liberation Serif", "Noto Sans CJK SC", serif;
  font-size: 12px;
  font-weight: 700;
  line-height: 13px;
}
</style>
